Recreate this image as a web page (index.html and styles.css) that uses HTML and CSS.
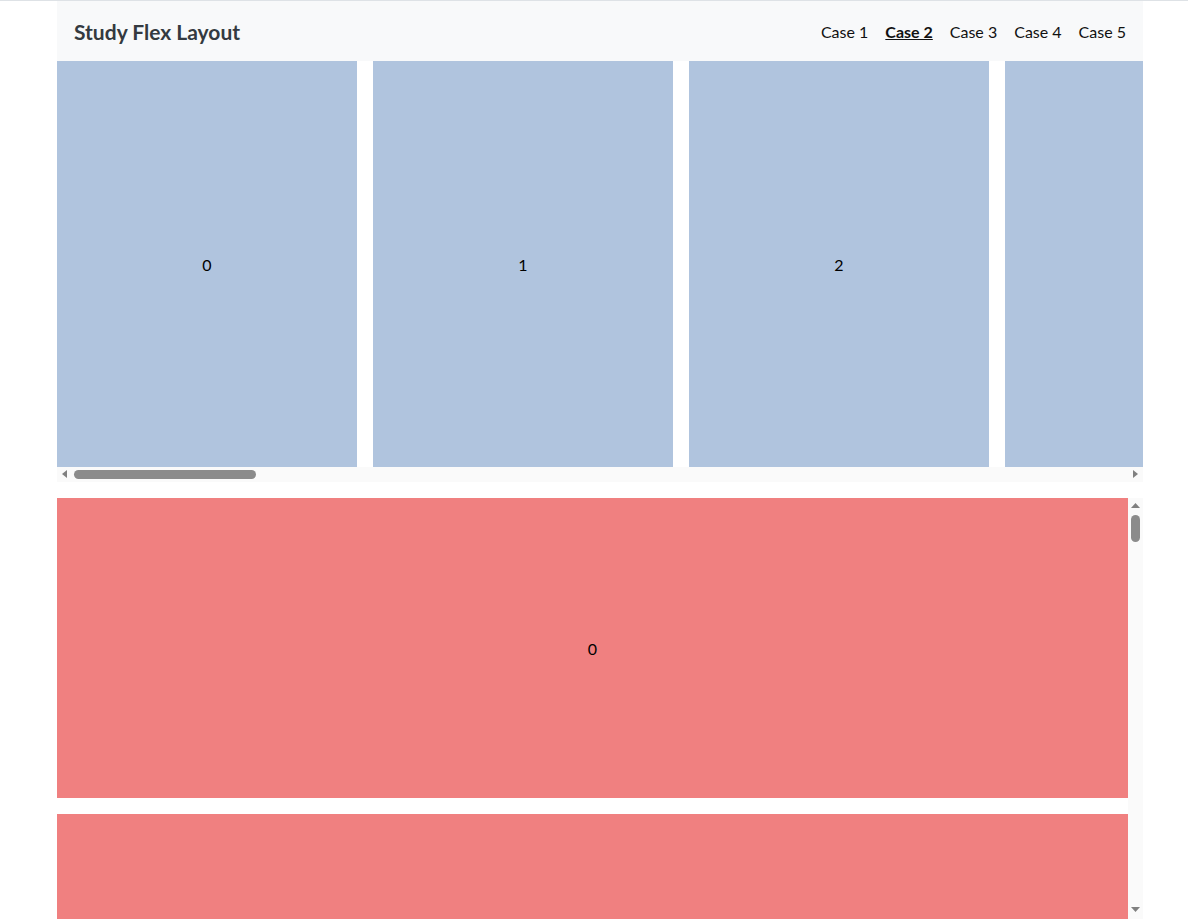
FILE: index.html
```html
<!DOCTYPE html>
<html lang="en">
<head>
<meta charset="utf-8">
<title>Study Flex Layout</title>
<link rel="stylesheet" href="styles.css">
</head>
<body>
<div class="page">
  <header class="header">
    <div class="title">Study Flex Layout</div>
    <nav class="nav">
      <a class="link">Case 1</a>
      <a class="link active">Case 2</a>
      <a class="link">Case 3</a>
      <a class="link">Case 4</a>
      <a class="link">Case 5</a>
    </nav>
  </header>
  <main class="content">
    <section class="hpane">
      <div class="hscroll">
        <div class="hitem">0</div><div class="hitem">1</div><div class="hitem">2</div><div class="hitem">3</div><div class="hitem">4</div>
        <div class="hitem">5</div><div class="hitem">6</div><div class="hitem">7</div><div class="hitem">8</div><div class="hitem">9</div>
        <div class="hitem">10</div><div class="hitem">11</div><div class="hitem">12</div><div class="hitem">13</div><div class="hitem">14</div>
        <div class="hitem">15</div><div class="hitem">16</div><div class="hitem">17</div><div class="hitem">18</div><div class="hitem">19</div>
      </div>
      <div class="hbar">
        <svg class="btn" width="15" height="15" viewBox="0 0 15 15"><polygon points="5,7 10,3 10,11" fill="#808080"/></svg>
        <div class="htrack"><div class="hthumb"></div></div>
        <svg class="btn" width="15" height="15" viewBox="0 0 15 15"><polygon points="10,7 5,3 5,11" fill="#808080"/></svg>
      </div>
    </section>
    <section class="vpane">
      <div class="vscroll">
        <div class="vitem">0</div><div class="vitem">1</div><div class="vitem">2</div><div class="vitem">3</div><div class="vitem">4</div>
        <div class="vitem">5</div><div class="vitem">6</div><div class="vitem">7</div><div class="vitem">8</div><div class="vitem">9</div>
        <div class="vitem">10</div><div class="vitem">11</div><div class="vitem">12</div><div class="vitem">13</div><div class="vitem">14</div>
        <div class="vitem">15</div><div class="vitem">16</div><div class="vitem">17</div><div class="vitem">18</div><div class="vitem">19</div>
      </div>
      <div class="vbar">
        <svg class="btn" width="15" height="15" viewBox="0 0 15 15"><polygon points="7.5,5 3,10 12,10" fill="#808080"/></svg>
        <div class="vtrack"><div class="vthumb"></div></div>
        <svg class="btn" width="15" height="15" viewBox="0 0 15 15"><polygon points="3,3 12,3 7.5,8" fill="#808080"/></svg>
      </div>
    </section>
  </main>
</div>
</body>
</html>
```
FILE: styles.css
```css
html, body {
  margin: 0;
  padding: 0;
  height: 100%;
  overflow: hidden;
}
body {
  border-top: 1px solid #dee2e6;
  box-sizing: border-box;
  font-family: Lato, "Liberation Sans", sans-serif;
  color: #212529;
  background: #fff;
}
.page {
  margin-left: 57px;
  width: 1086px;
  height: 100%;
  display: flex;
  flex-direction: column;
}
.header {
  flex: 0 0 60px;
  background: #f8f9fa;
  display: flex;
  align-items: center;
  justify-content: space-between;
  padding: 0 17px;
  box-sizing: border-box;
}
.title {
  font-size: 21px;
  font-weight: 700;
  color: #343a40;
}
.nav {
  display: flex;
  gap: 17px;
}
.link {
  font-size: 16px;
  color: #111;
}
.link.active {
  font-weight: 700;
  text-decoration: underline;
}
.content {
  flex: 1;
  min-height: 0;
  display: flex;
  flex-direction: column;
  gap: 16px;
}

/* horizontal pane */
.hpane {
  flex: 1;
  min-height: 0;
  display: flex;
  flex-direction: column;
}
.hscroll {
  flex: 1;
  min-height: 0;
  display: flex;
  gap: 16px;
  overflow: hidden;
}
.hitem {
  flex: 0 0 300px;
  background: #b0c4de;
  display: flex;
  align-items: center;
  justify-content: center;
  font-size: 16px;
  color: #000;
}
.hbar {
  flex: 0 0 15px;
  display: flex;
  background: #fafafa;
}
.btn {
  flex: 0 0 15px;
  display: block;
}
.htrack {
  flex: 1;
  padding: 3px 0 3px 2px;
  box-sizing: border-box;
}
.hthumb {
  width: 182px;
  height: 9px;
  border-radius: 5px;
  background: #8b8b8b;
}

/* vertical pane */
.vpane {
  flex: 1;
  min-height: 0;
  display: flex;
}
.vscroll {
  flex: 1;
  min-width: 0;
  display: flex;
  flex-direction: column;
  gap: 16px;
  overflow: hidden;
}
.vitem {
  flex: 0 0 300px;
  background: #f08080;
  display: flex;
  align-items: center;
  justify-content: center;
  font-size: 16px;
  color: #000;
}
.vbar {
  flex: 0 0 15px;
  display: flex;
  flex-direction: column;
  background: #fafafa;
}
.vtrack {
  flex: 1;
  padding: 2px 3px 0 3px;
  box-sizing: border-box;
}
.vthumb {
  width: 9px;
  height: 27px;
  border-radius: 5px;
  background: #8b8b8b;
}
```
